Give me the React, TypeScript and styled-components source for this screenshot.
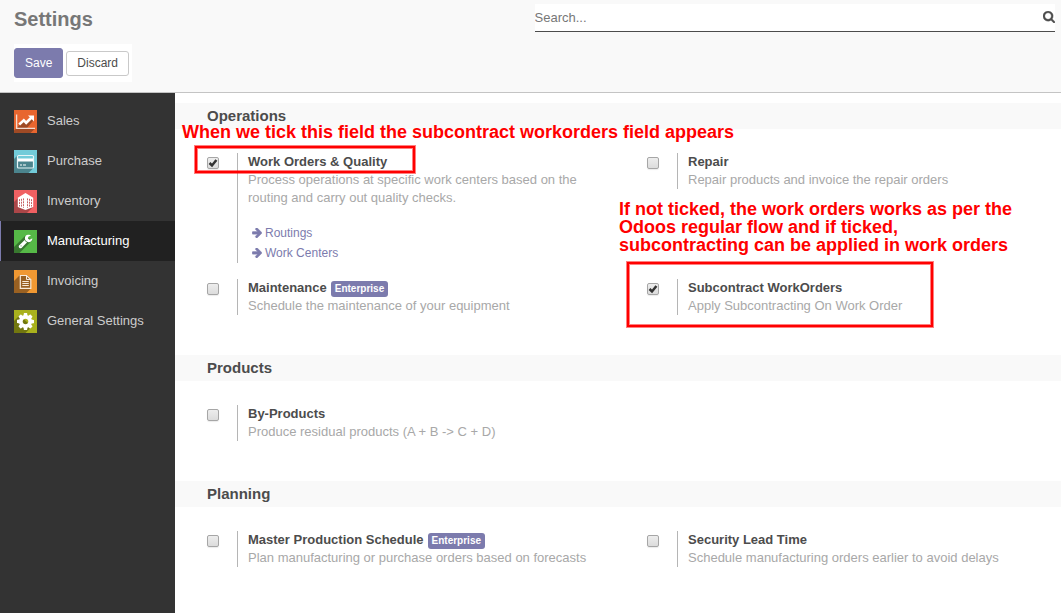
import React, { useId } from 'react';
import styled, { createGlobalStyle, css } from 'styled-components';

const color = {
  brand: '#7c7bad',
  text: '#4c4c4c',
  muted: '#a8a8a8',
  panel: '#f9f9f9',
  line: '#c4c4c4',
  note: '#ff0000',
};

const GlobalStyle = createGlobalStyle`
  *, *::before, *::after { box-sizing: border-box; }
  body {
    margin: 0;
    background: #fff;
    color: ${color.text};
    font-family: "Liberation Sans", Arial, sans-serif;
    font-size: 13px;
    line-height: 18px;
  }
  button, input { font-family: inherit; }
`;

const Page = styled.div`
  display: flex;
  flex-direction: column;
  min-height: 100vh;
`;

/* ---------- control panel ---------- */

const ControlPanel = styled.header`
  display: grid;
  grid-template-columns: 1fr 1fr;
  align-items: start;
  padding: 4px 6px 10px 14px;
  background: ${color.panel};
  border-bottom: 1px solid ${color.line};
`;

const Title = styled.h1`
  margin: 0 0 10px;
  color: #777;
  font-size: 20px;
  line-height: 30px;
`;

const ButtonGroup = styled.div`
  display: inline-flex;
  align-items: center;
  gap: 3px;
  padding: 4px 3px 4px 0;
  background: #fff;
`;

const Button = styled.button<{ $primary?: boolean }>`
  height: 25px;
  padding: 0 10px;
  border: 1px solid #c9c9c9;
  border-radius: 3px;
  background: #fff;
  color: ${color.text};
  font-size: 12px;
  line-height: 18px;
  cursor: pointer;
  ${(p) =>
    p.$primary &&
    css`
      height: 30px;
      border-color: ${color.brand};
      background: ${color.brand};
      color: #fff;
    `}
`;

const SearchBox = styled.div`
  display: flex;
  align-items: center;
  height: 28px;
  background: #fff;
  border-bottom: 1px solid ${color.text};
`;

const SearchInput = styled.input`
  flex: 1;
  min-width: 0;
  padding: 0;
  border: 0;
  outline: 0;
  background: transparent;
  color: ${color.text};
  font-size: 13px;
  &::placeholder { color: #777; opacity: 1; }
`;

const SearchButton = styled.button`
  display: flex;
  padding: 0 0 2px;
  border: 0;
  background: none;
  color: ${color.text};
  cursor: pointer;
`;

/* ---------- navigation ---------- */

const Body = styled.div`
  display: flex;
  flex: 1;
`;

const Sidebar = styled.nav`
  flex: 0 0 175px;
  padding-top: 8px;
  background: #333;
`;

const Tab = styled.a<{ $active?: boolean }>`
  display: flex;
  align-items: center;
  gap: 10px;
  height: 40px;
  padding-left: 13px;
  border-left: 1px solid ${(p) => (p.$active ? color.brand : 'transparent')};
  background: ${(p) => (p.$active ? '#212121' : 'transparent')};
  color: ${(p) => (p.$active ? '#fff' : '#ccc')};
  text-decoration: none;
`;

const AppIcon = styled.svg`
  flex: none;
  width: 23px;
  height: 23px;
  margin-top: 1px;
`;

/* ---------- settings ---------- */

const Content = styled.main`
  flex: 1;
  min-width: 0;
  padding-top: 10px;
`;

const SectionTitle = styled.h2`
  margin: 0 0 24px;
  padding-left: 32px;
  background: ${color.panel};
  font-size: 15px;
  line-height: 26px;
`;

const SettingGrid = styled.div`
  display: grid;
  grid-template-columns: 1fr 1fr;
  align-items: start;
  gap: 16px 26px;
  margin-bottom: 40px;
  padding-left: 32px;
`;

const SettingItem = styled.div`
  position: relative;
  display: grid;
  grid-template-columns: 30px 1fr;
  align-items: start;
`;

const CheckCell = styled.span`
  display: grid;
  width: 12px;
  height: 12px;
  margin-top: 4px;
  > * { grid-area: 1 / 1; }
  svg { visibility: hidden; pointer-events: none; }
  input:checked + svg { visibility: visible; }
`;

const Checkbox = styled.input`
  appearance: none;
  width: 12px;
  height: 12px;
  margin: 0;
  border: 1px solid #a6a6a6;
  border-radius: 2px;
  background: linear-gradient(#ededed, #dcdcdc);
  box-shadow: 0 1px 1px rgba(0, 0, 0, 0.08);
`;

const SettingText = styled.div`
  padding: 0 16px 0 10px;
  border-left: 1px solid #b5b5b5;
`;

const LabelRow = styled.div`
  display: flex;
  align-items: flex-end;
  gap: 4px;
`;

const Label = styled.label`
  font-weight: bold;
`;

const Badge = styled.span`
  padding: 0 4px;
  border-radius: 3px;
  background: ${color.brand};
  color: #fff;
  font-size: 10px;
  font-weight: bold;
  line-height: 16px;
`;

const Description = styled.p`
  margin: 0;
  color: ${color.muted};
`;

const LinkList = styled.div`
  display: flex;
  flex-direction: column;
  align-items: flex-start;
  margin-top: 16px;
  padding-left: 4px;
`;

const SettingLink = styled.a`
  display: flex;
  align-items: center;
  gap: 3px;
  color: ${color.brand};
  font-size: 12px;
  line-height: 20px;
  text-decoration: none;
`;

/* ---------- annotations over the settings ---------- */

type Spot = { $left: number; $top: number };

const Note = styled.p<Spot>`
  position: absolute;
  left: ${(p) => p.$left}px;
  top: ${(p) => p.$top}px;
  z-index: 1;
  margin: 0;
  color: ${color.note};
  font-size: 18px;
  font-weight: bold;
  line-height: 18px;
  white-space: pre;
`;

const Frame = styled.span<Spot & { $width: number; $height: number }>`
  position: absolute;
  left: ${(p) => p.$left}px;
  top: ${(p) => p.$top}px;
  width: ${(p) => p.$width}px;
  height: ${(p) => p.$height}px;
  border: 2px solid ${color.note};
  box-shadow: 0 0 0 1px rgba(255, 0, 0, 0.5), inset 0 0 0 1px rgba(255, 0, 0, 0.5);
  pointer-events: none;
`;

/* ---------- icons ---------- */

const SearchIcon = () => (
  <svg
    width="12"
    height="12"
    viewBox="64 128 1664 1664"
    fill="currentColor"
    stroke="currentColor"
    strokeWidth="50"
    aria-hidden="true"
  >
    <path d="M1216 832q0-185-131.500-316.500t-316.500-131.500-316.500 131.500-131.500 316.500 131.500 316.500 316.500 131.500 316.500-131.500 131.500-316.500zm512 832q0 52-38 90t-90 38q-54 0-90-38l-343-342q-179 124-399 124-143 0-273.500-55.500t-225-150-150-225-55.500-273.500 55.500-273.500 150-225 225-150 273.500-55.500 273.500 55.500 225 150 150 225 55.500 273.500q0 220-124 399l343 343q37 37 37 90z" />
  </svg>
);

const ArrowIcon = () => (
  <svg
    width="10"
    height="10"
    viewBox="256 216 1472 1524"
    fill="currentColor"
    stroke="currentColor"
    strokeWidth="60"
    aria-hidden="true"
  >
    <path d="M1728 960q0 54-37 91l-651 651q-39 37-91 37-51 0-90-37l-75-75q-38-38-38-91t38-91l293-293h-704q-52 0-84.500-37.500t-32.500-90.500v-128q0-53 32.500-90.500t84.500-37.500h704l-293-294q-38-36-38-90t38-90l75-75q38-38 90-38 53 0 91 38l651 651q37 35 37 90z" />
  </svg>
);

const CheckMark = () => (
  <svg width="12" height="12" viewBox="0 0 12 12" aria-hidden="true">
    <path d="M2.500 6 5 8.500 9.400 3" fill="none" stroke="#333" strokeWidth="2.500" />
  </svg>
);

const SalesIcon = () => (
  <AppIcon viewBox="0 0 23 23" aria-hidden="true">
    <path fill="#e8662f" d="M0 0h23v23H0z" />
    <path fill="#9f4a25" d="m3 18 3-3.500 4-3.200 2.500 2.500L19 8v3l-6 7zM2 18.500h19L16.500 23H0v-2.500z" />
    <path fill="none" stroke="#f3dcd2" strokeWidth="1.300" d="M2.600 4.500v13.900H21" />
    <path fill="none" stroke="#fff" strokeWidth="2.600" d="m5.200 14.500 4.600-4.200 2.400 2.500 5.600-5.500" />
    <path fill="#fff" d="M14 5.500h6v6z" />
  </AppIcon>
);

const PurchaseIcon = () => (
  <AppIcon viewBox="0 0 23 23" aria-hidden="true">
    <path fill="#72cbd9" d="M0 0h23v23H0z" />
    <path fill="#4b848d" d="M3.500 5.500 0 9v14h14.500l5-5V5.500z" />
    <path fill="#72cbd9" d="M4 6h15v3H4z" />
    <rect x="3.500" y="5.500" width="16" height="12.500" rx="1" fill="none" stroke="#e6f5f7" strokeWidth="1.200" />
    <path fill="#fff" d="M4 8.500h15v3H4zM6 14.500h2v1H6zM9 14.500h3v1H9z" />
  </AppIcon>
);

const InventoryIcon = () => (
  <AppIcon viewBox="0 0 23 23" aria-hidden="true">
    <path fill="#f06062" d="M0 0h23v23H0z" />
    <path fill="#ab4648" d="M4 8 0 12v11h13l6-6z" />
    <path fill="#fff" d="m11.500 3 7.700 4.800v9.200l-7.700 3-7.700-3V7.800z" />
    <path
      fill="none"
      stroke="#c04e50"
      strokeWidth="0.900"
      strokeDasharray="2 0.900"
      d="M5.500 9.200v7.300M7.500 8.800v8.400M9.500 8.400v9.400M13.500 8.400v9.400M15.500 8.800v8.400M17.500 9.200v7.300"
    />
  </AppIcon>
);

const ManufacturingIcon = () => (
  <AppIcon viewBox="0 0 23 23" aria-hidden="true">
    <path fill="#56b947" d="M0 0h23v23H0z" />
    <path fill="#38782f" d="M11 6 0 17v6h5.500L18.500 10z" />
    <svg x="4.500" y="4.500" width="14" height="14" viewBox="85 128 1641 1643">
      <path
        fill="#fff"
        d="M448 1472q0-26-19-45t-45-19-45 19-19 45 19 45 45 19 45-19 19-45zm644-420l-682 682q-37 37-90 37-52 0-91-37l-106-108q-38-36-38-90 0-53 38-91l681-681q39 98 114.500 173.500t173.500 114.500zm634-435q0 39-23 106-47 134-164.500 217.500t-258.500 83.500q-185 0-316.500-131.500t-131.500-316.500 131.500-316.500 316.500-131.500q58 0 121.500 16.500t107.500 46.500q16 11 16 28t-16 28l-293 169v224l193 107q5-3 79-48.500t135.500-81 70.500-35.500q15 0 23.500 10t8.500 25z"
      />
    </svg>
  </AppIcon>
);

const InvoicingIcon = () => (
  <AppIcon viewBox="0 0 23 23" aria-hidden="true">
    <path fill="#f09832" d="M0 0h23v23H0z" />
    <path fill="#9a6122" d="M6 5 0 11v12h12.500l4.500-4.500V9l-4-4z" />
    <path fill="none" stroke="#f8ead9" strokeWidth="1.200" d="M6.300 5.500h6.200L16.800 9.500v8.800H6.300z" />
    <path fill="none" stroke="#f8ead9" d="M12.500 5.500v4h4M8.300 11.500h6.500M8.300 13.500h6.500M8.300 15.500h6.500" />
  </AppIcon>
);

const GeneralIcon = () => (
  <AppIcon viewBox="0 0 23 23" aria-hidden="true">
    <path fill="#a9b11d" d="M0 0h23v23H0z" />
    <path fill="#72770f" d="M5.500 5.500 0 11v12h11.500l6.500-6.500z" />
    <svg x="3" y="3" width="17" height="17" viewBox="128 128 1536 1536">
      <path
        fill="#fff"
        d="M1152 896q0-106-75-181t-181-75-181 75-75 181 75 181 181 75 181-75 75-181zm512-109v222q0 12-8 23t-20 13l-185 28q-19 54-39 91 35 50 107 138 10 12 10 25t-9 23q-27 37-99 108t-94 71q-12 0-26-9l-138-108q-44 23-91 38-16 136-29 186-7 28-36 28h-222q-14 0-24.500-8.500t-11.500-21.500l-28-184q-49-16-90-37l-141 107q-10 9-25 9-14 0-25-11-126-114-165-168-7-10-7-23 0-12 8-23 15-21 51-66.500t54-70.500q-27-50-41-99l-183-27q-13-2-21-12.500t-8-23.500v-222q0-12 8-23t19-13l186-28q14-46 39-92-40-57-107-138-10-12-10-24 0-10 9-23 26-36 98.500-107.500t94.500-71.500q13 0 26 10l138 107q44-23 91-38 16-136 29-186 7-28 36-28h222q14 0 24.500 8.500t11.500 21.500l28 184q49 16 90 37l142-107q9-9 24-9 13 0 25 10 129 119 165 170 7 8 7 22 0 12-8 23-15 21-51 66.500t-54 70.500q26 50 41 98l183 28q13 2 21 12.500t8 23.500z"
      />
    </svg>
  </AppIcon>
);

const tabs = [
  { name: 'Sales', Icon: SalesIcon },
  { name: 'Purchase', Icon: PurchaseIcon },
  { name: 'Inventory', Icon: InventoryIcon },
  { name: 'Manufacturing', Icon: ManufacturingIcon, active: true },
  { name: 'Invoicing', Icon: InvoicingIcon },
  { name: 'General Settings', Icon: GeneralIcon },
];

type SettingProps = {
  label: string;
  description: string;
  checked?: boolean;
  enterprise?: boolean;
  links?: string[];
  children?: React.ReactNode;
};

function Setting({ label, description, checked, enterprise, links, children }: SettingProps) {
  const id = useId();
  return (
    <SettingItem>
      <CheckCell>
        <Checkbox type="checkbox" id={id} defaultChecked={checked} />
        <CheckMark />
      </CheckCell>
      <SettingText>
        <LabelRow>
          <Label htmlFor={id}>{label}</Label>
          {enterprise && <Badge>Enterprise</Badge>}
        </LabelRow>
        <Description>{description}</Description>
        {links && (
          <LinkList>
            {links.map((link) => (
              <SettingLink href="#" key={link}>
                <ArrowIcon />
                {link}
              </SettingLink>
            ))}
          </LinkList>
        )}
      </SettingText>
      {children}
    </SettingItem>
  );
}

export default function App() {
  return (
    <Page>
      <GlobalStyle />
      <ControlPanel>
        <div>
          <Title>Settings</Title>
          <ButtonGroup>
            <Button $primary>Save</Button>
            <Button>Discard</Button>
          </ButtonGroup>
        </div>
        <SearchBox>
          <SearchInput type="text" placeholder="Search..." aria-label="Search" />
          <SearchButton aria-label="Search">
            <SearchIcon />
          </SearchButton>
        </SearchBox>
      </ControlPanel>
      <Body>
        <Sidebar>
          {tabs.map(({ name, Icon, active }) => (
            <Tab href="#" key={name} $active={active}>
              <Icon />
              {name}
            </Tab>
          ))}
        </Sidebar>
        <Content>
          <SectionTitle>Operations</SectionTitle>
          <SettingGrid>
            <Setting
              label="Work Orders & Quality"
              description="Process operations at specific work centers based on the routing and carry out quality checks."
              links={['Routings', 'Work Centers']}
              checked
            >
              <Note $left={-25} $top={-30}>
                When we tick this field the subcontract workorders field appears
              </Note>
              <Frame $left={-12} $top={-7} $width={220} $height={27} />
            </Setting>
            <Setting label="Repair" description="Repair products and invoice the repair orders" />
            <Setting label="Maintenance" description="Schedule the maintenance of your equipment" enterprise />
            <Setting label="Subcontract WorkOrders" description="Apply Subcontracting On Work Order" checked>
              <Note $left={-28} $top={-79}>
                {'If not ticked, the work orders works as per the\nOdoos regular flow and if ticked,\nsubcontracting can be applied in work orders'}
              </Note>
              <Frame $left={-20} $top={-17} $width={306} $height={65} />
            </Setting>
          </SettingGrid>
          <SectionTitle>Products</SectionTitle>
          <SettingGrid>
            <Setting label="By-Products" description="Produce residual products (A + B -> C + D)" />
          </SettingGrid>
          <SectionTitle>Planning</SectionTitle>
          <SettingGrid>
            <Setting
              label="Master Production Schedule"
              description="Plan manufacturing or purchase orders based on forecasts"
              enterprise
            />
            <Setting label="Security Lead Time" description="Schedule manufacturing orders earlier to avoid delays" />
          </SettingGrid>
        </Content>
      </Body>
    </Page>
  );
}
